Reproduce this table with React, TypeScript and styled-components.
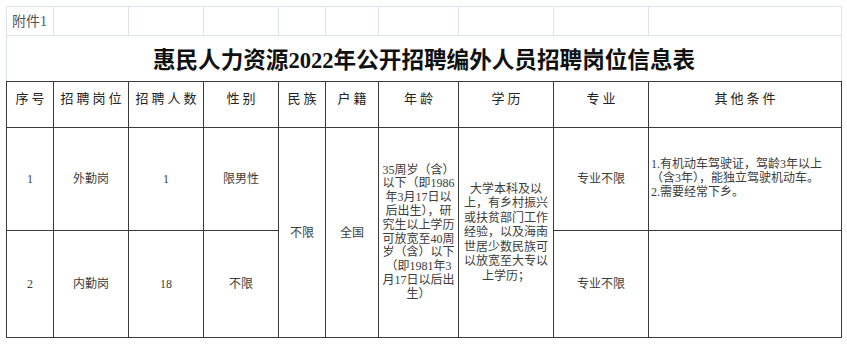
import * as React from 'react';
import styled, { createGlobalStyle } from 'styled-components';

const GlobalStyle = createGlobalStyle`
    html, body {
        margin: 0;
        padding: 0;
        background: #ffffff;
    }
`;

const SERIF = `"Liberation Serif", "Noto Sans CJK SC", serif`;
const SANS = `"Noto Sans CJK SC", "Noto Sans", sans-serif`;
const DARK = '#3a3a3a';
const GRID = '#dde2ee';

const columns = [47, 75, 75, 75, 47, 53, 80, 95, 95, 193];
const headings = ['序号', '招聘岗位', '招聘人数', '性别', '民族', '户籍', '年龄', '学历', '专业', '其他条件'];

const ageLines = [
    '35周岁（含）',
    '以下（即1986',
    '年3月17日以',
    '后出生），研',
    '究生以上学历',
    '可放宽至40周',
    '岁（含）以下',
    '（即1981年3',
    '月17日以后出',
    '生）',
];

const eduLines = [
    '大学本科及以',
    '上，有乡村振兴',
    '或扶贫部门工作',
    '经验，以及海南',
    '世居少数民族可',
    '以放宽至大专以',
    '上学历；',
];

const otherLines = [
    '1.有机动车驾驶证，驾龄3年以上',
    '（含3年），能独立驾驶机动车。',
    '2.需要经常下乡。',
];

export default class App extends React.Component {
    renderLines = (lines: string[]) => {
        return lines.map((line, index) => <Line key={index}>{line}</Line>);
    }

    render() {
        return (
            <Page>
                <GlobalStyle />
                <Sheet>
                    <colgroup>
                        {columns.map((w, index) => <col key={index} style={{ width: w }} />)}
                    </colgroup>
                    <tbody>
                        <NoteRow>
                            <NoteCell>附件1</NoteCell>
                            {columns.slice(1).map((_, index) => <NoteCell key={index} />)}
                        </NoteRow>
                        <TitleRow>
                            <TitleCell colSpan={10}>惠民人力资源2022年公开招聘编外人员招聘岗位信息表</TitleCell>
                        </TitleRow>
                        <HeadRow>
                            {headings.map((h, index) => <HeadCell key={index}>{h}</HeadCell>)}
                        </HeadRow>
                        <BodyRow $height={103}>
                            <Cell>1</Cell>
                            <Cell>外勤岗</Cell>
                            <Cell>1</Cell>
                            <Cell>限男性</Cell>
                            <Cell rowSpan={2}>不限</Cell>
                            <Cell rowSpan={2}>全国</Cell>
                            <Cell rowSpan={2} $lineHeight={13.8}>{this.renderLines(ageLines)}</Cell>
                            <Cell rowSpan={2} $lineHeight={14.4}>{this.renderLines(eduLines)}</Cell>
                            <Cell>专业不限</Cell>
                            <Cell $align="left" $lineHeight={13.8}>{this.renderLines(otherLines)}</Cell>
                        </BodyRow>
                        <BodyRow $height={107}>
                            <Cell>2</Cell>
                            <Cell>内勤岗</Cell>
                            <Cell>18</Cell>
                            <Cell>不限</Cell>
                            <Cell>专业不限</Cell>
                            <Cell $align="left" />
                        </BodyRow>
                    </tbody>
                </Sheet>
            </Page>
        );
    }
}

const Page = styled.div`
    padding: 6px;
    width: 835px;
`;

const Sheet = styled.table`
    width: 835px;
    table-layout: fixed;
    border-collapse: collapse;
    border-spacing: 0;
`;

const NoteRow = styled.tr`
    height: 29px;
`;

const NoteCell = styled.td`
    border: 1px solid ${GRID};
    padding: 2px 0 0 5px;
    font-family: ${SERIF};
    font-size: 14px;
    color: #555555;
    line-height: 16px;
    vertical-align: middle;
    white-space: nowrap;
`;

const TitleRow = styled.tr`
    height: 46px;
`;

const TitleCell = styled.td`
    border-left: 1px solid ${GRID};
    border-right: 1px solid ${GRID};
    border-bottom: 1px solid ${DARK};
    text-align: center;
    vertical-align: middle;
    font-family: ${SERIF};
    font-weight: bold;
    font-size: 22.6px;
    color: #111111;
    padding: 0;
    white-space: nowrap;
`;

const HeadRow = styled.tr`
    height: 46px;
`;

const HeadCell = styled.td`
    border: 1px solid ${DARK};
    text-align: center;
    vertical-align: middle;
    font-family: ${SANS};
    font-size: 13px;
    letter-spacing: 3px;
    line-height: 16px;
    color: #222222;
    padding: 0 0 13px 3px;
    white-space: nowrap;
`;

const BodyRow = styled.tr<{ $height: number }>`
    height: ${props => props.$height}px;
`;

const Cell = styled.td<{ $align?: string; $lineHeight?: number }>`
    border: 1px solid ${DARK};
    text-align: ${props => props.$align || 'center'};
    vertical-align: middle;
    font-family: ${SERIF};
    font-size: 12px;
    line-height: ${props => props.$lineHeight || 14}px;
    color: #3c3c3c;
    padding: ${props => props.$align === 'left' ? '0 0 0 2px' : '0'};
`;

const Line = styled.div`
    white-space: nowrap;
`;
